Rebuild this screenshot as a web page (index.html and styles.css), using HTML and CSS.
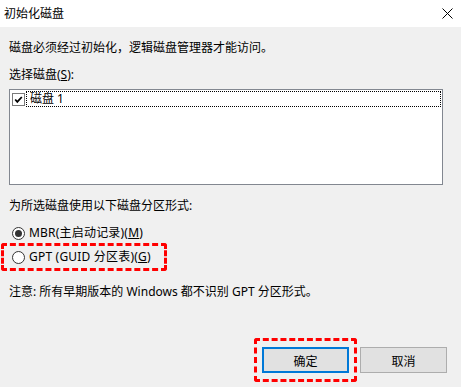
FILE: index.html
```html
<!DOCTYPE html>
<html lang="zh-CN">
<head>
<meta charset="utf-8">
<title>初始化磁盘</title>
<link rel="stylesheet" href="styles.css">
</head>
<body>
<div class="dialog">
  <div class="titlebar">
    <span class="title">初始化磁盘</span>
    <svg class="close" width="11" height="11" viewBox="0 0 11 11"><path d="M0.5 0.5 L10.5 10.5 M10.5 0.5 L0.5 10.5" stroke="#000" stroke-width="1" fill="none"/></svg>
  </div>
  <div class="content">
    <p class="line">磁盘必须经过初始化，逻辑磁盘管理器才能访问。</p>
    <p class="line gap-sel">选择磁盘(<u>S</u>):</p>
    <div class="listbox">
      <div class="item">
        <svg class="check" width="13" height="13" viewBox="0 0 13 13"><rect x="0.5" y="0.5" width="12" height="12" fill="#fff" stroke="#7a7a7a"/><path d="M3.2 6.5 L5.3 8.8 L9.8 4" stroke="#000" stroke-width="1.8" fill="none"/></svg>
        <span class="focus">磁盘 1</span>
      </div>
    </div>
    <p class="line gap-fmt">为所选磁盘使用以下磁盘分区形式:</p>
    <div class="radio gap-mbr">
      <svg width="13" height="13" viewBox="0 0 13 13"><circle cx="6.5" cy="6.5" r="6" fill="#fff" stroke="#333"/><circle cx="6.5" cy="6.5" r="3.5" fill="#333"/></svg>
      <span>MBR(主启动记录)(<u>M</u>)</span>
    </div>
    <div class="radio gap-gpt hl-gpt">
      <svg width="13" height="13" viewBox="0 0 13 13"><circle cx="6.5" cy="6.5" r="6" fill="#fff" stroke="#333"/></svg>
      <span>GPT (GUID 分区表)(<u>G</u>)</span>
    </div>
    <p class="line gap-note">注意: 所有早期版本的 Windows 都不识别 GPT 分区形式。</p>
  </div>
  <div class="buttons">
    <button class="btn btn-ok">确定</button>
    <button class="btn">取消</button>
  </div>
</div>
</body>
</html>
```

FILE: styles.css
```css
html, body {
  margin: 0;
  padding: 0;
}
body {
  width: 461px;
  height: 387px;
  overflow: hidden;
  background: #f0f0f0;
  font-family: "Noto Sans", "Noto Sans CJK SC", sans-serif;
  font-size: 12px;
  color: #000;
}
.dialog {
  display: flex;
  flex-direction: column;
  height: 387px;
}
.titlebar {
  height: 27px;
  background: #fff;
  display: flex;
  align-items: center;
  justify-content: space-between;
  padding: 0 8px 0 4px;
  flex: none;
}
.title {
  line-height: 16px;
}
.close {
  display: block;
}
.content {
  padding: 13px 9px 0 9px;
  display: flex;
  flex-direction: column;
  align-items: flex-start;
}
.line {
  margin: 0;
  line-height: 16px;
  white-space: nowrap;
}
.gap-sel { margin-top: 11px; }
.gap-fmt { margin-top: 13px; }
.gap-note { margin-top: 19px; }
.listbox {
  margin-top: 6px;
  box-sizing: border-box;
  width: 434px;
  height: 96px;
  background: #fff;
  border: 1px solid #828790;
  padding: 1px 1px 0 2px;
}
.item {
  display: flex;
  align-items: center;
  height: 16px;
}
.check {
  display: block;
  flex: none;
}
.focus {
  flex: 1;
  margin-left: 1px;
  height: 16px;
  box-sizing: border-box;
  border: 1px dotted #000;
  line-height: 14px;
  padding-left: 3px;
}
.radio {
  display: inline-flex;
  align-items: center;
  gap: 4px;
  height: 16px;
  line-height: 16px;
  margin-left: 3px;
  white-space: nowrap;
  letter-spacing: 0.2px;
}
.radio svg { display: block; }
.gap-mbr { margin-top: 11px; }
.gap-gpt { margin-top: 8px; }
.hl-gpt { position: relative; }
.hl-gpt::after {
  content: "";
  position: absolute;
  left: -11px;
  right: -16px;
  top: -6px;
  bottom: -6px;
  border: 3px dashed #ff0000;
  border-radius: 3px;
}
.buttons {
  margin-top: auto;
  padding: 0 14px 14px 0;
  display: flex;
  justify-content: flex-end;
  gap: 11px;
}
.btn {
  width: 87px;
  height: 26px;
  box-sizing: border-box;
  background: #e1e1e1;
  border: 1px solid #adadad;
  font-family: "Noto Sans CJK SC", sans-serif;
  font-size: 12px;
  color: #000;
  padding: 0;
  margin: 0;
}
.btn-ok {
  border: 2px solid #0078d7;
  position: relative;
}
.btn-ok::after {
  content: "";
  position: absolute;
  left: -10px;
  right: -10px;
  top: -11px;
  bottom: -11px;
  border: 3px dashed #ff0000;
  border-radius: 3px;
}
```
